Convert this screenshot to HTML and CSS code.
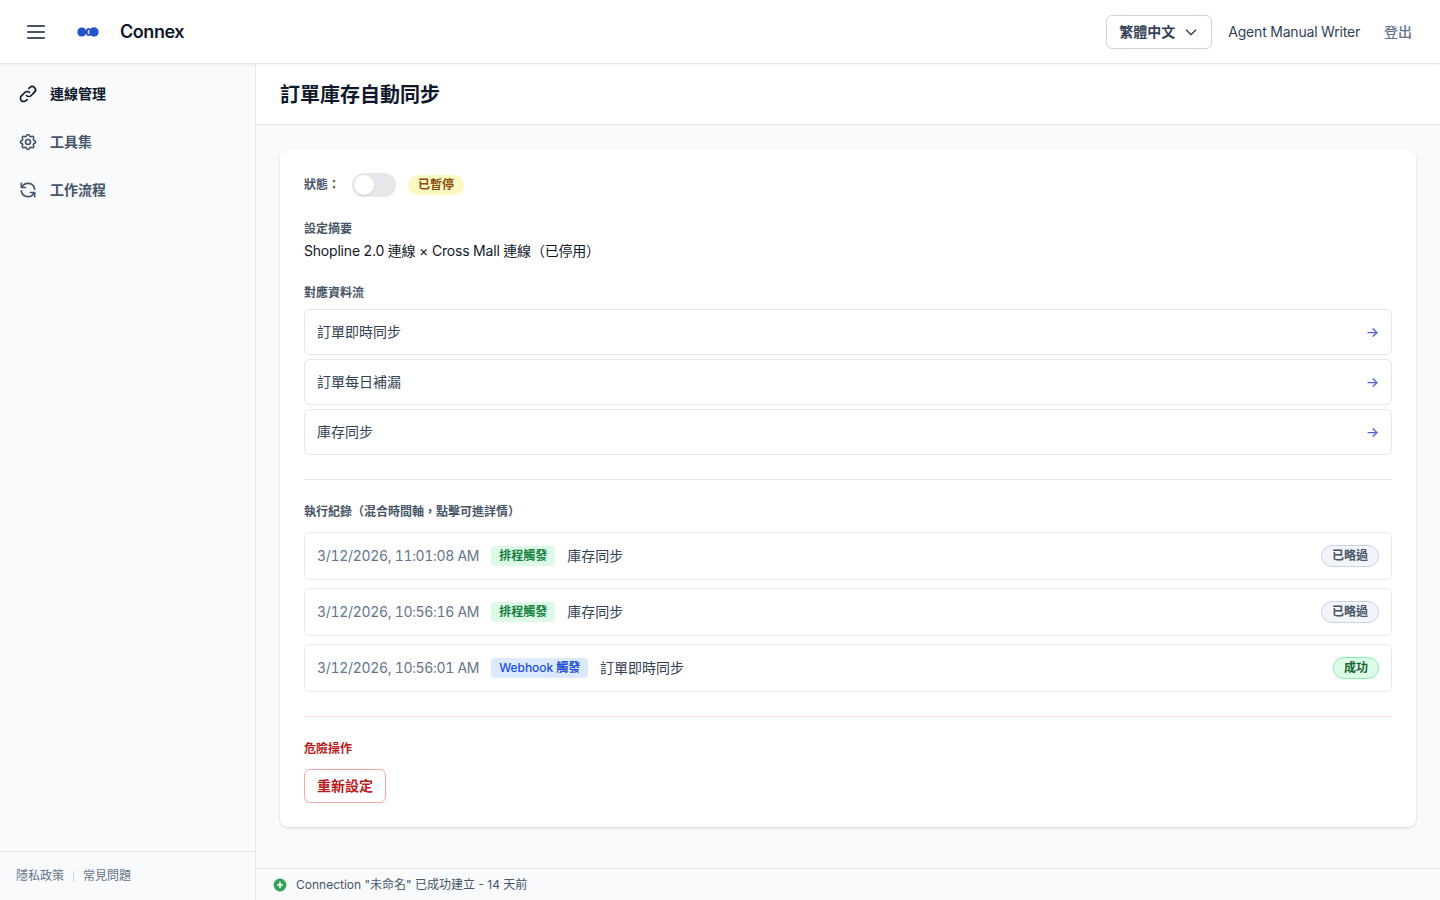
FILE: index.html
```html
<!DOCTYPE html>
<html lang="zh-TW">

<head>
    <meta charset="UTF-8">
    <meta name="viewport" content="width=device-width, initial-scale=1.0">
    <title>Connex - 訂單庫存自動同步</title>
    <link rel="stylesheet" href="styles.css">
</head>

<body>
    <header class="topbar">
        <button class="menu-btn" aria-label="選單">
            <svg width="24" height="24" viewBox="0 0 24 24"><path d="M4 6h16M4 12h16M4 18h16"/></svg>
        </button>
        <svg class="logo" width="24" height="12" viewBox="0 0 24 12">
            <circle cx="5.8" cy="6" r="4.5"/>
            <circle cx="18" cy="6" r="4.7"/>
            <ellipse cx="12.6" cy="6" rx="2.7" ry="4"/>
            <path d="M9 4h2v4H9z"/>
            <ellipse class="logo-hole" cx="12.6" cy="6" rx="0.9" ry="2.3"/>
        </svg>
        <span class="brand">Connex</span>
        <div class="topbar-right">
            <button class="lang-btn">
                繁體中文
                <svg width="16" height="16" viewBox="0 0 24 24"><path d="M19 9l-7 7-7-7"/></svg>
            </button>
            <span class="user-name">Agent Manual Writer</span>
            <button class="logout-btn">登出</button>
        </div>
    </header>

    <div class="layout">
        <aside class="sidebar">
            <nav class="side-nav">
                <a class="nav-item active" href="#">
                    <svg width="20" height="20" viewBox="0 0 24 24"><path d="M13.828 10.172a4 4 0 00-5.656 0l-4 4a4 4 0 105.656 5.656l1.102-1.101m-.758-4.899a4 4 0 005.656 0l4-4a4 4 0 00-5.656-5.656l-1.1 1.1"/></svg>
                    連線管理
                </a>
                <a class="nav-item" href="#">
                    <svg width="20" height="20" viewBox="0 0 24 24"><path d="M10.325 4.317c.426-1.756 2.924-1.756 3.35 0a1.724 1.724 0 002.573 1.066c1.543-.94 3.31.826 2.37 2.37a1.724 1.724 0 001.065 2.572c1.756.426 1.756 2.924 0 3.35a1.724 1.724 0 00-1.066 2.573c.94 1.543-.826 3.31-2.37 2.37a1.724 1.724 0 00-2.572 1.065c-.426 1.756-2.924 1.756-3.35 0a1.724 1.724 0 00-2.573-1.066c-1.543.94-3.31-.826-2.37-2.37a1.724 1.724 0 00-1.065-2.572c-1.756-.426-1.756-2.924 0-3.35a1.724 1.724 0 001.066-2.573c-.94-1.543.826-3.31 2.37-2.37.996.608 2.296.07 2.572-1.065z"/><path d="M15 12a3 3 0 11-6 0 3 3 0 016 0z"/></svg>
                    工具集
                </a>
                <a class="nav-item" href="#">
                    <svg width="20" height="20" viewBox="0 0 24 24"><path d="M4 4v5h.582m15.356 2A8.001 8.001 0 004.582 9m0 0H9m11 11v-5h-.581m0 0a8.003 8.003 0 01-15.357-2m15.357 2H15"/></svg>
                    工作流程
                </a>
            </nav>
            <div class="side-footer">
                <a href="#">隱私政策</a>
                <span class="sep"></span>
                <a href="#">常見問題</a>
            </div>
        </aside>

        <main class="main">
            <div class="page-header">
                <h1>訂單庫存自動同步</h1>
            </div>

            <div class="content">
                <div class="card">
                    <!-- 狀態 -->
                    <div class="status-row">
                        <span class="status-label">狀態：</span>
                        <button class="toggle" role="switch" aria-checked="false" aria-label="狀態"><span class="knob"></span></button>
                        <span class="badge badge-paused">已暫停</span>
                    </div>

                    <!-- 設定摘要 -->
                    <section class="summary">
                        <h2>設定摘要</h2>
                        <p>Shopline 2.0 連線 × Cross Mall 連線（已停用）</p>
                    </section>

                    <!-- 資料流 -->
                    <section class="flows">
                        <h2>對應資料流</h2>
                        <div class="flow-list">
                            <a class="flow" href="#">訂單即時同步 <span class="arrow">→</span></a>
                            <a class="flow" href="#">訂單每日補漏 <span class="arrow">→</span></a>
                            <a class="flow" href="#">庫存同步 <span class="arrow">→</span></a>
                        </div>
                    </section>

                    <!-- 執行紀錄 -->
                    <section class="logs">
                        <h2>執行紀錄（混合時間軸，點擊可進詳情）</h2>
                        <div class="log-list">
                            <a class="log" href="#">
                                <span class="time">3/12/2026, 11:01:08 AM</span>
                                <span class="tag tag-schedule">排程觸發</span>
                                <span class="log-name">庫存同步</span>
                                <span class="result result-skipped">已略過</span>
                            </a>
                            <a class="log" href="#">
                                <span class="time">3/12/2026, 10:56:16 AM</span>
                                <span class="tag tag-schedule">排程觸發</span>
                                <span class="log-name">庫存同步</span>
                                <span class="result result-skipped">已略過</span>
                            </a>
                            <a class="log" href="#">
                                <span class="time">3/12/2026, 10:56:01 AM</span>
                                <span class="tag tag-webhook">Webhook <b>觸發</b></span>
                                <span class="log-name">訂單即時同步</span>
                                <span class="result result-success">成功</span>
                            </a>
                        </div>
                    </section>

                    <!-- 危險操作 -->
                    <section class="danger">
                        <h2>危險操作</h2>
                        <button class="reset-btn">重新設定</button>
                    </section>
                </div>
            </div>

            <footer class="statusbar">
                <svg width="16" height="16" viewBox="0 0 16 16">
                    <circle cx="8" cy="8" r="6.4"/>
                    <path d="M8 5.6v4.8M5.6 8h4.8"/>
                </svg>
                <span>Connection "未命名" 已成功建立 - 14 天前</span>
            </footer>
        </main>
    </div>
</body>

</html>
```

FILE: styles.css
```css
* {
    box-sizing: border-box;
    margin: 0;
    padding: 0;
}

body {
    font-family: Inter, "Noto Sans CJK TC", sans-serif;
    font-size: 14px;
    line-height: 20px;
    color: #0f172a;
    background-color: #f8fafc;
    height: 100vh;
    display: flex;
    flex-direction: column;
    overflow: hidden;
}

a {
    color: inherit;
    text-decoration: none;
}

button {
    font: inherit;
    color: inherit;
    background: none;
    border: none;
    cursor: pointer;
}

svg {
    flex-shrink: 0;
    fill: none;
    stroke: currentColor;
    stroke-width: 2;
    stroke-linecap: round;
    stroke-linejoin: round;
}

h2 {
    font-size: 12px;
    line-height: 16px;
    font-weight: 600;
    color: #475569;
}

/* Header */
.topbar {
    height: 64px;
    flex-shrink: 0;
    display: flex;
    align-items: center;
    padding: 0 28px 0 24px;
    background-color: #fff;
    border-bottom: 1px solid #e5e7eb;
    box-shadow: 0 1px 2px rgba(0, 0, 0, 0.05);
    position: relative;
}

.menu-btn {
    display: flex;
    color: #475569;
}

.logo {
    margin-left: 28px;
    fill: #2552cc;
    stroke: none;
}

.logo-hole {
    fill: #d5def6;
}

.brand {
    margin-left: 20px;
    font-size: 18px;
    line-height: 28px;
    font-weight: 600;
    letter-spacing: -0.45px;
}

.topbar-right {
    margin-left: auto;
    display: flex;
    align-items: center;
}

.lang-btn {
    height: 34px;
    display: flex;
    align-items: center;
    gap: 8px;
    padding: 0 12px;
    border: 1px solid #cbd5e1;
    border-radius: 6px;
    font-weight: 600;
    color: #334155;
}

.user-name {
    margin: 0 24px 0 16px;
    letter-spacing: -0.2px;
    color: #334155;
}

.logout-btn {
    color: #64748b;
    font-weight: 500;
}

.layout {
    flex: 1;
    min-height: 0;
    display: flex;
}

/* Sidebar */
.sidebar {
    width: 256px;
    flex-shrink: 0;
    display: flex;
    flex-direction: column;
    border-right: 1px solid #e5e7eb;
}

.side-nav {
    flex: 1;
    display: flex;
    flex-direction: column;
    gap: 8px;
    padding: 10px 8px;
}

.nav-item {
    height: 40px;
    display: flex;
    align-items: center;
    gap: 12px;
    padding: 0 10px;
    font-weight: 600;
    color: #475569;
}

.nav-item.active {
    color: #0f172a;
}

.side-footer {
    height: 49px;
    display: flex;
    align-items: center;
    gap: 9px;
    padding: 0 16px;
    border-top: 1px solid #e5e7eb;
    font-size: 12px;
    line-height: 16px;
    color: #64748b;
}

.sep {
    width: 1px;
    height: 11px;
    background-color: #cbd5e1;
}

/* Main */
.main {
    flex: 1;
    min-width: 0;
    display: flex;
    flex-direction: column;
}

.page-header {
    height: 61px;
    display: flex;
    align-items: center;
    padding: 2px 24px 0;
    background-color: #fff;
    border-bottom: 1px solid #e5e7eb;
}

h1 {
    font-size: 20px;
    line-height: 28px;
    font-weight: 600;
}

.content {
    flex: 1;
    padding: 24px;
}

.card {
    padding: 24px;
    background-color: #fff;
    border-radius: 8px;
    box-shadow: 0 1px 3px rgba(0, 0, 0, 0.1), 0 1px 2px rgba(0, 0, 0, 0.06);
}

.status-row {
    display: flex;
    align-items: center;
    gap: 12px;
}

.status-label {
    font-size: 12px;
    line-height: 16px;
    font-weight: 600;
    color: #475569;
}

.toggle {
    width: 44px;
    height: 24px;
    display: flex;
    padding: 2px;
    border-radius: 12px;
    background-color: #e5e7eb;
}

.knob {
    width: 20px;
    height: 20px;
    border-radius: 50%;
    background-color: #fff;
    box-shadow: 0 1px 2px rgba(0, 0, 0, 0.1);
}

.badge {
    padding: 2px 10px;
    border-radius: 10px;
    font-size: 12px;
    line-height: 16px;
    font-weight: 600;
}

.badge-paused {
    background-color: #fef9c3;
    color: #854d0e;
}

.summary {
    margin-top: 24px;
}

.summary p {
    margin-top: 4px;
    letter-spacing: -0.2px;
}

.flows {
    margin-top: 24px;
}

.flow-list {
    display: flex;
    flex-direction: column;
    gap: 4px;
    margin-top: 8px;
}

.flow {
    display: flex;
    justify-content: space-between;
    padding: 12px;
    border: 1px solid #e5e7eb;
    border-radius: 6px;
    color: #334155;
}

.arrow {
    font-size: 14px;
    font-weight: 500;
    color: #4f5fd5;
}

.logs {
    margin-top: 24px;
    padding-top: 24px;
    border-top: 1px solid #e5e7eb;
}

.log-list {
    display: flex;
    flex-direction: column;
    gap: 8px;
    margin-top: 12px;
}

.log {
    display: flex;
    align-items: center;
    gap: 12px;
    padding: 12px;
    border: 1px solid #e5e7eb;
    border-radius: 6px;
    color: #334155;
}

.time {
    color: #64748b;
    font-variant-numeric: tabular-nums;
    letter-spacing: -0.32px;
}

.tag {
    padding: 2px 8px;
    border-radius: 4px;
    font-size: 12px;
    line-height: 16px;
    font-weight: 600;
}

.tag-schedule {
    background-color: #dcfce7;
    color: #15803d;
}

.tag-webhook {
    background-color: #dbeafe;
    color: #1d4ed8;
    font-weight: 500;
    letter-spacing: -0.06px;
}

.tag-webhook b {
    font-weight: 600;
}

.result {
    margin-left: auto;
    padding: 2px 10px;
    border: 1px solid;
    border-radius: 11px;
    font-size: 12px;
    line-height: 16px;
    height: 22px;
    font-weight: 600;
}

.result-skipped {
    background-color: #f1f5f9;
    border-color: #cbd5e1;
    color: #475569;
}

.result-success {
    background-color: #dcfce7;
    border-color: #86efac;
    color: #166534;
}

.danger {
    margin-top: 24px;
    padding-top: 24px;
    border-top: 1px solid #fee2e2;
}

.danger h2 {
    color: #b91c1c;
}

.reset-btn {
    display: block;
    margin-top: 12px;
    padding: 6px 12px;
    border: 1px solid #fca5a5;
    border-radius: 6px;
    font-weight: 600;
    color: #b91c1c;
}

/* Bottom status bar */
.statusbar {
    height: 32px;
    display: flex;
    align-items: center;
    gap: 8px;
    padding: 0 16px;
    border-top: 1px solid #e5e7eb;
    font-size: 12px;
    line-height: 16px;
    color: #475569;
}

.statusbar circle {
    fill: #38a05a;
    stroke: none;
}

.statusbar path {
    stroke: #fff;
    stroke-width: 1.6;
}
```
